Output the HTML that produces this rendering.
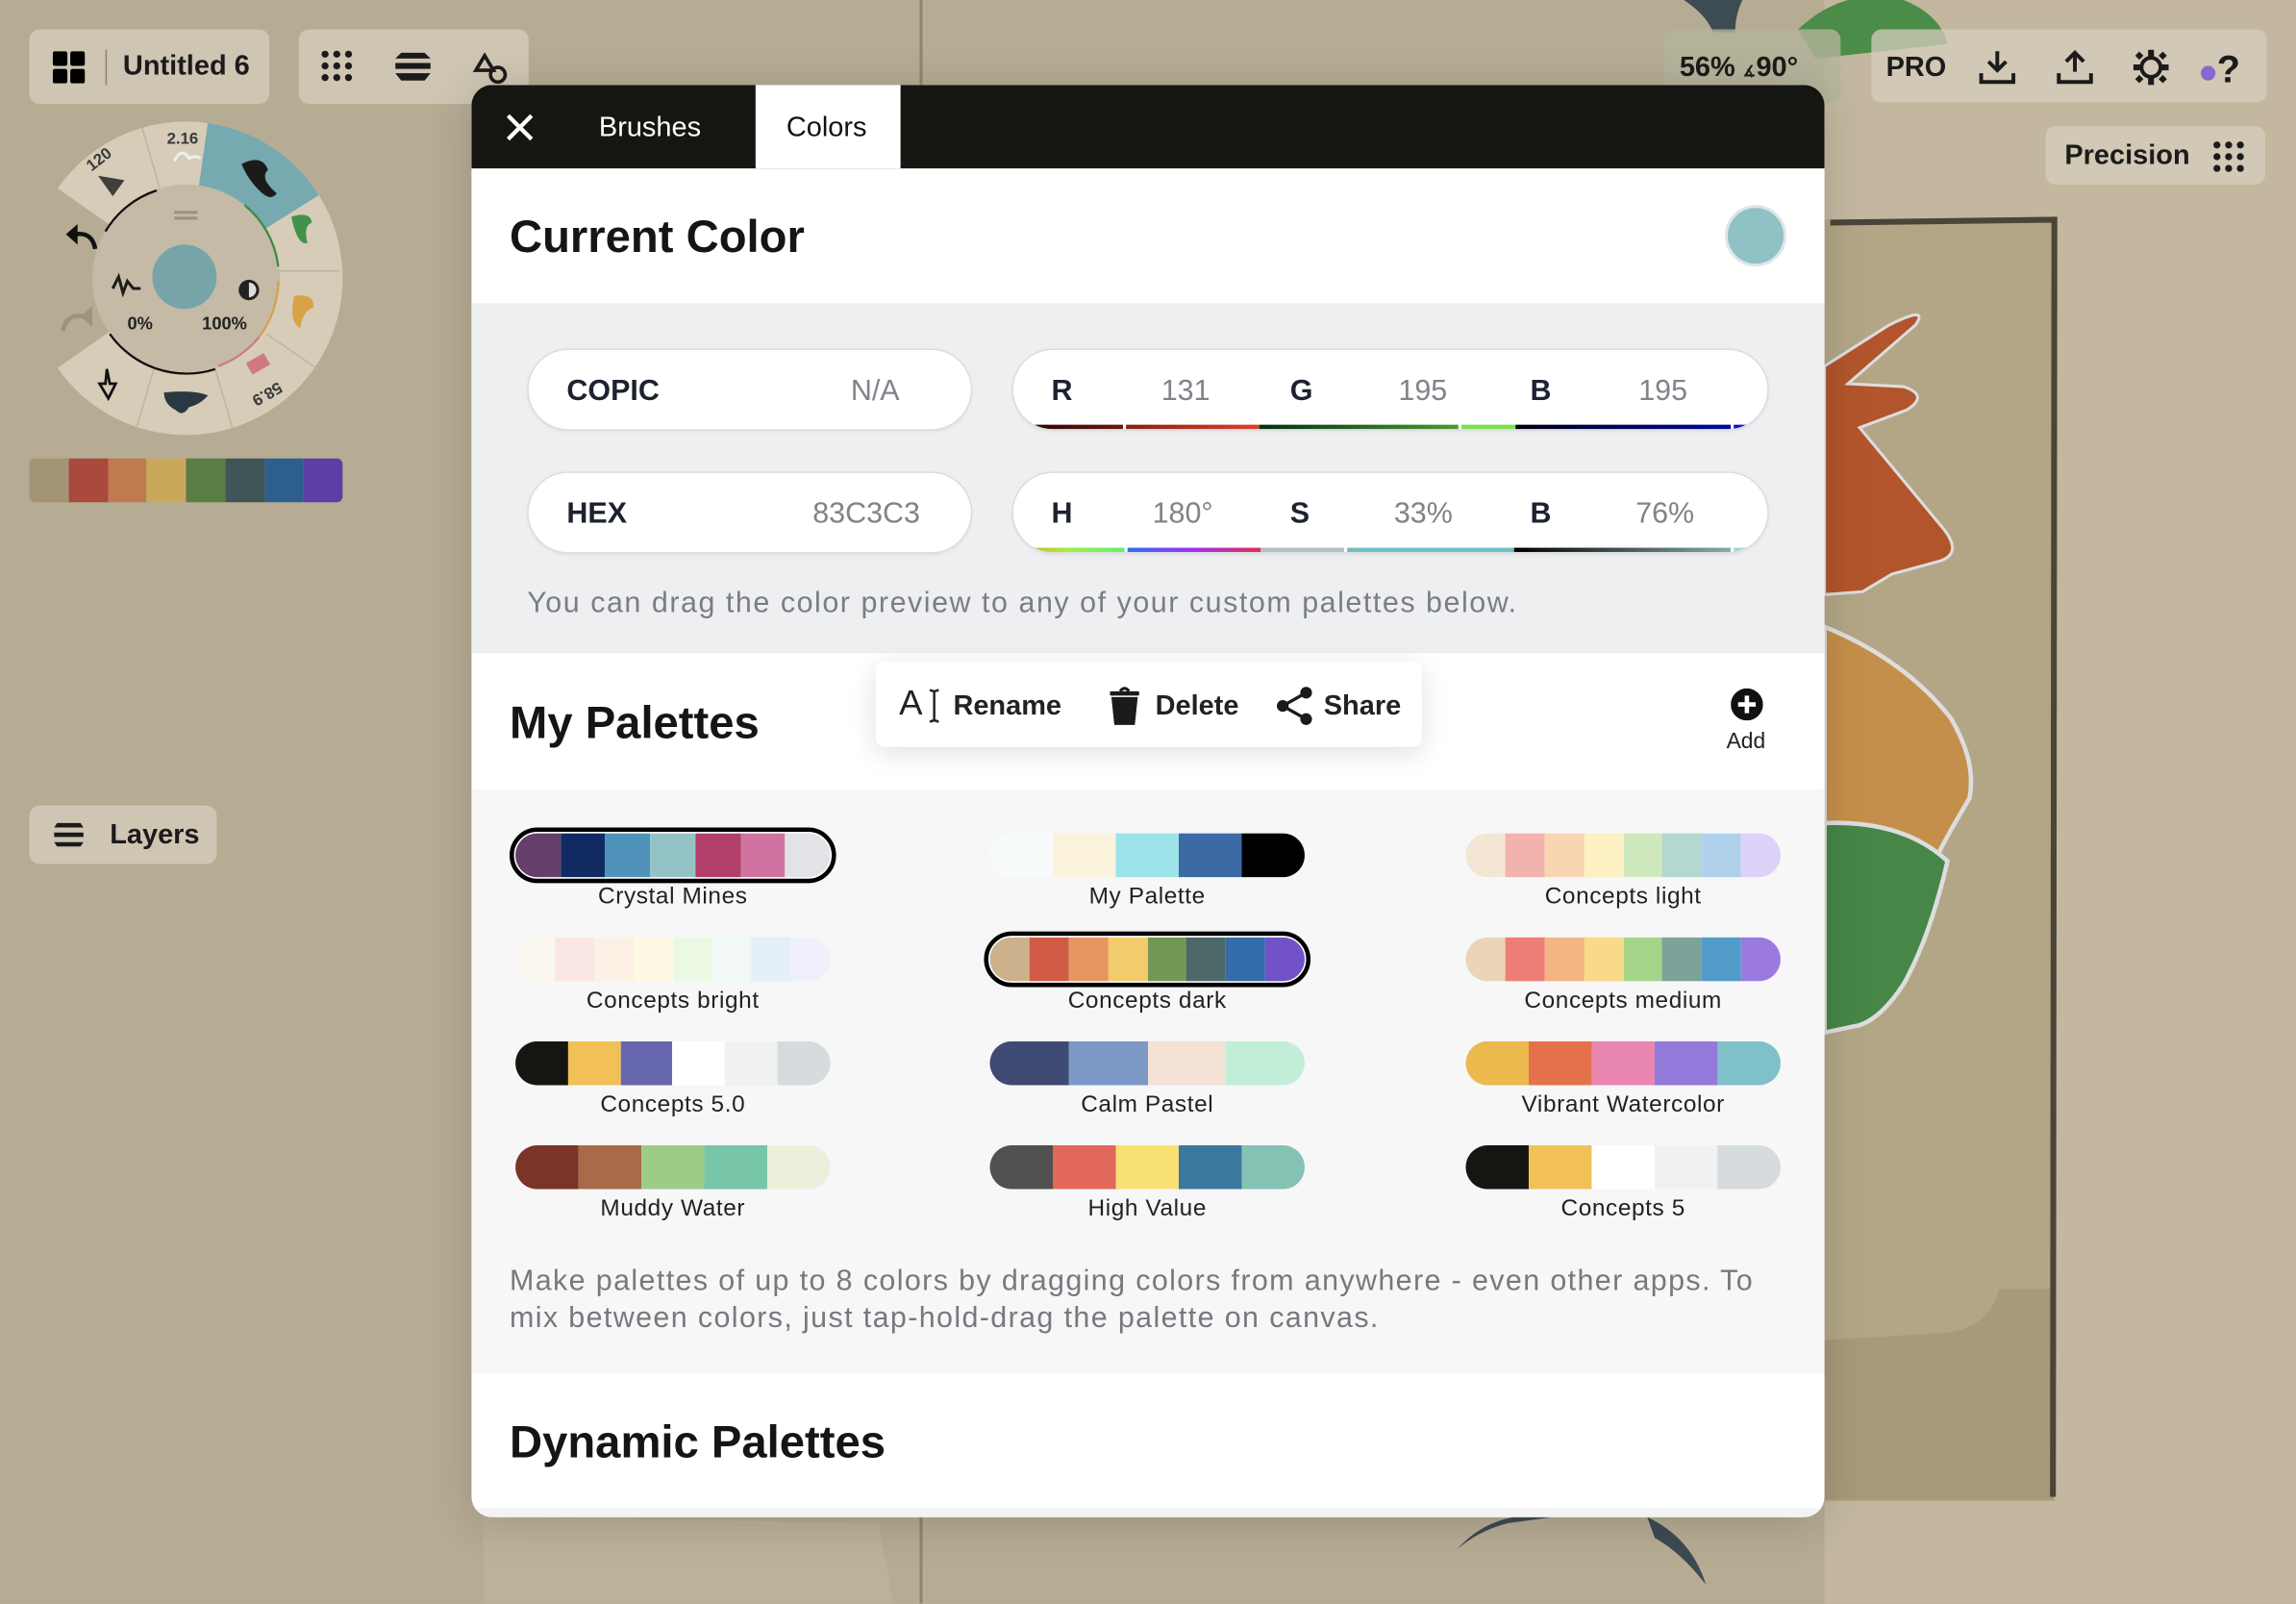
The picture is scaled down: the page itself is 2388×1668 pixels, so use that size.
<!DOCTYPE html>
<html><head><meta charset="utf-8"><style>
*{margin:0;padding:0;box-sizing:border-box}
html,body{width:2388px;height:1668px;overflow:hidden;background:#bcb199}
#s{position:absolute;left:0;top:0;width:1568px;height:1095px;transform:scale(1.52296);transform-origin:0 0;font-family:"Liberation Sans",sans-serif;color:#1b1b1b}
.a{position:absolute}
.box{position:absolute;background:rgba(214,205,188,.75);border-radius:7px}
.t{font-weight:bold;font-size:19px}
#modal{position:absolute;left:322px;top:58px;width:924px;height:978px;border-radius:14px;overflow:hidden;background:#fff;box-shadow:0 4px 30px rgba(0,0,0,.15)}
.pill{position:absolute;background:#fff;border-radius:28px;height:56px;border:1px solid #dcdde0;box-shadow:0 1px 2px rgba(0,0,0,.06);overflow:hidden}
.pill span{position:absolute;top:17px;font-size:20px}
.lb{font-weight:bold;color:#1d2230}
.vl{color:#80838a}
.bar{position:absolute;left:0;right:0;bottom:0;height:3px;display:flex}
.sw{position:absolute;width:215px;height:30px;border-radius:15px;overflow:hidden;display:flex}
.sw i{flex:1}
.sel{position:absolute;width:223px;height:38px;border:3px solid #000;border-radius:19px;background:#fff}
.pl{position:absolute;width:215px;text-align:center;font-size:16px;color:#222;letter-spacing:.4px}
</style></head><body><div id="s">
<svg class="a" style="left:0;top:0" width="1568" height="1095">
<rect width="1568" height="1095" fill="#b6ab93"/>
<rect x="1246" y="0" width="322" height="1095" fill="#c3b89f"/>
<rect x="1246" y="150" width="157" height="875" fill="#b3a687"/>
<path d="M1246 915 L1330 910 Q1360 905 1365 880 L1403 880 L1403 1024 L1246 1024Z" fill="#a79979"/>
<path d="M1250 152 L1403 150 L1402 1022" stroke="#4a4538" stroke-width="4" fill="none"/>
<path d="M629 0 V58 M629 1036 V1095" stroke="#8e8570" stroke-width="2"/>
<path d="M1246 250 L1290 222 Q1318 208 1308 222 L1262 262 L1300 264 Q1318 270 1302 280 L1270 292 L1328 362 Q1340 378 1325 383 L1292 392 L1272 404 L1246 406Z" fill="#b2552c" stroke="#ddd" stroke-width="2"/>
<path d="M1246 428 Q1300 450 1332 490 Q1350 520 1345 545 Q1330 570 1320 590 L1246 570Z" fill="#c48f4a" stroke="#ddd" stroke-width="3"/>
<path d="M1246 562 Q1300 560 1330 588 Q1318 640 1300 672 Q1285 695 1270 700 L1246 705Z" fill="#468646" stroke="#ddd" stroke-width="3"/>
<path d="M1150 0 Q1165 10 1170 22 L1185 22 Q1185 10 1190 0Z" fill="#3d4c52"/>
<path d="M1228 20 Q1260 -10 1300 0 Q1325 10 1330 30 L1240 40Z" fill="#4b8c48"/>
<path d="M995 1058 Q1020 1030 1060 1036 L1030 1040 Q1010 1045 995 1058Z" fill="#3e4a52"/>
<path d="M1125 1036 Q1155 1050 1165 1082 Q1148 1060 1130 1050Z" fill="#3e4a52"/>
<path d="M330 1036 L600 1040 L610 1095 L330 1095Z" fill="#c0b59d" opacity=".6"/>
</svg>

<div class="box" style="left:20px;top:20px;width:164px;height:51px"></div>
<svg class="a" style="left:36px;top:35px" width="22" height="22"><rect x="0" y="0" width="10" height="10" rx="1.5"/><rect x="12" y="0" width="10" height="10" rx="1.5"/><rect x="0" y="12" width="10" height="10" rx="1.5"/><rect x="12" y="12" width="10" height="10" rx="1.5"/></svg>
<div class="a" style="left:72px;top:34px;width:1px;height:24px;background:#8a826f"></div>
<div class="a t" style="left:84px;top:35px">Untitled 6</div>
<div class="box" style="left:204px;top:20px;width:157px;height:51px"></div>
<svg class="a" style="left:219px;top:34px" width="130" height="26">
<g fill="#1b1b1b"><circle cx="3" cy="3" r="2.4"/><circle cx="11" cy="3" r="2.4"/><circle cx="19" cy="3" r="2.4"/><circle cx="3" cy="11" r="2.4"/><circle cx="11" cy="11" r="2.4"/><circle cx="19" cy="11" r="2.4"/><circle cx="3" cy="19" r="2.4"/><circle cx="19" cy="19" r="2.4"/><circle cx="11" cy="19" r="2.4"/>
<path d="M55 2 H71 L75 6 H51Z M51 9 H75 V13 H51Z M51 16 H75 L71 21 H55Z"/></g>
<path d="M112 4 L106 14 H118Z" fill="none" stroke="#1b1b1b" stroke-width="2.4"/><circle cx="121" cy="17" r="5" fill="none" stroke="#1b1b1b" stroke-width="2.4"/>
</svg>

<svg class="a" style="left:20px;top:80px" width="220" height="225">
<g transform="translate(107,110)">
<circle r="85.5" fill="none" stroke="#d6ccb7" stroke-width="43" stroke-dasharray="432.7 104.5" transform="rotate(215)"/>
<circle r="85.5" fill="none" stroke="#76a9b0" stroke-width="43" stroke-dasharray="74.6 462.6" transform="rotate(278)"/>
<g stroke="#bfb49c" stroke-width="1"><line x1="-18" y1="-62" x2="-30" y2="-103"/><line x1="63" y1="-5" x2="105" y2="-5"/><line x1="55" y1="38" x2="90" y2="62"/><line x1="20" y1="62" x2="32" y2="103"/><line x1="-22" y1="62" x2="-34" y2="103"/></g>
<circle r="64" fill="#c4baa5"/>
<path d="M-55 -32 A64 64 0 0 1 -20 -60" stroke="#111" stroke-width="1.5" fill="none"/>
<path d="M-52 38 A64 64 0 0 0 20 62" stroke="#111" stroke-width="1.5" fill="none"/>
<path d="M40 -50 A64 64 0 0 1 63 -8" stroke="#3d8a44" stroke-width="1.5" fill="none"/>
<path d="M63 2 A64 64 0 0 1 50 40" stroke="#d4a24a" stroke-width="1.5" fill="none"/>
<path d="M50 40 A64 64 0 0 1 22 60" stroke="#d07a80" stroke-width="1.5" fill="none"/>
<circle cx="-1" cy="-1" r="22" fill="#76a4a8"/>
<rect x="-8" y="-46" width="16" height="2" fill="#9a917d"/><rect x="-8" y="-42" width="16" height="2" fill="#9a917d"/>
<path d="M38 -78 Q52 -85 56 -74 Q50 -68 62 -58 Q58 -52 50 -60 Q42 -68 38 -78Z" fill="#1b1b1b"/>
<path d="M72 -42 Q85 -46 86 -38 Q80 -36 83 -24 Q76 -22 72 -42Z" fill="#43914a"/>
<path d="M74 12 Q88 10 87 20 Q80 22 78 34 Q70 30 74 12Z" fill="#d9a248"/>
<path d="M-15 78 Q5 76 15 80 Q10 86 2 88 Q-2 95 -7 90 Q-15 86 -15 78Z" fill="#2a3842"/>
<path d="M-60 -70 L-42 -67 L-50 -56Z" fill="#1b1b1b" opacity=".8"/>
<path d="M-8 -80 Q-3 -90 2 -82 Q6 -84 10 -82" stroke="#eee" stroke-width="2" fill="none"/>
<rect x="42" y="54" width="14" height="9" transform="rotate(-30 49 58)" fill="#d07a80"/>
<path d="M-54 62 L-52 72 L-48 72 L-53 82 L-59 72 L-55 72Z" fill="none" stroke="#111" stroke-width="1.8"/>
<text x="-13" y="-92" font-size="11" font-weight="bold" fill="#3a3a3a" font-family="Liberation Sans">2.16</text>
<text x="-68" y="-77" font-size="11" font-weight="bold" fill="#3a3a3a" font-family="Liberation Sans" transform="rotate(-38 -60 -80)">120</text>
<text x="50" y="82" font-size="11" font-weight="bold" fill="#3a3a3a" font-family="Liberation Sans" transform="rotate(150 58 78)">58.9</text>
<text x="-40" y="35" font-size="12" font-weight="bold" fill="#222" font-family="Liberation Sans">0%</text>
<text x="11" y="35" font-size="12" font-weight="bold" fill="#222" font-family="Liberation Sans">100%</text>
<circle cx="43" cy="8" r="7" fill="#222"/><path d="M43 3 A5 5 0 0 1 43 13Z" fill="#ddd"/>
<path d="M-50 7 L-46 -1 L-43 10 L-40 2 L-36 7 L-31 7" stroke="#1b1b1b" stroke-width="2" fill="none"/>
<path d="M-82 -30 L-74 -37 L-74 -23Z" fill="#111"/><path d="M-76 -30 Q-64 -32 -62 -20" stroke="#111" stroke-width="3" fill="none"/>
<path d="M-64 26 L-72 19 L-72 33Z" fill="#9c937f" transform="scale(-1 1) translate(136 0)"/><path d="M-70 26 Q-82 24 -84 36" stroke="#9c937f" stroke-width="3" fill="none"/>
</g></svg>
<div class="a" style="left:20px;top:313px;width:214px;height:30px;border-radius:4px;overflow:hidden;display:flex">
<i style="flex:1;background:#a49476"></i><i style="flex:1;background:#aa4a3c"></i><i style="flex:1;background:#c07a50"></i><i style="flex:1;background:#c9a85a"></i><i style="flex:1;background:#5a7d44"></i><i style="flex:1;background:#3f5558"></i><i style="flex:1;background:#2d5f8e"></i><i style="flex:1;background:#5b3ea6"></i></div>
<div class="box" style="left:20px;top:550px;width:128px;height:40px"></div>
<svg class="a" style="left:36px;top:561px" width="22" height="18"><path d="M3 1 H19 L21 4 H1Z M1 7.5 H21 V10.5 H1Z M1 14 H21 L19 17 H3Z" fill="#1b1b1b"/></svg>
<div class="a t" style="left:75px;top:560px">Layers</div>

<div class="box" style="left:1136px;top:20px;width:121px;height:50px;background:rgba(180,180,155,.8)"></div>
<div class="a t" style="left:1147px;top:36px">56% <span style="font-size:10px">∡</span>90°</div>
<div class="box" style="left:1278px;top:20px;width:270px;height:50px"></div>
<div class="a t" style="left:1288px;top:36px">PRO</div>
<svg class="a" style="left:1350px;top:32px" width="190" height="28">
<g stroke="#1b1b1b" stroke-width="2.6" fill="none"><path d="M14 3 V16 M8 10 L14 16 L20 10 M3 18 V24 H25 V18"/>
<path d="M67 17 V4 M61 10 L67 4 L73 10 M56 18 V24 H78 V18"/>
<circle cx="119" cy="14" r="6.5"/></g>
<g fill="#1b1b1b"><rect x="117" y="2" width="4" height="5"/><rect x="117" y="21" width="4" height="5"/><rect x="107" y="12" width="5" height="4"/><rect x="126" y="12" width="5" height="4"/><rect x="109" y="4" width="4" height="4" transform="rotate(45 111 6)"/><rect x="125" y="4" width="4" height="4" transform="rotate(45 127 6)"/><rect x="109" y="20" width="4" height="4" transform="rotate(45 111 22)"/><rect x="125" y="20" width="4" height="4" transform="rotate(45 127 22)"/></g>
<circle cx="158" cy="18" r="5" fill="#8a67cf"/>
<text x="164" y="24" font-size="26" font-weight="bold" fill="#1b1b1b" font-family="Liberation Sans">?</text>
</svg>
<div class="box" style="left:1397px;top:86px;width:150px;height:40px"></div>
<div class="a t" style="left:1410px;top:96px">Precision</div>
<svg class="a" style="left:1511px;top:96px" width="22" height="22"><g fill="#1b1b1b"><circle cx="3" cy="3" r="2.4"/><circle cx="11" cy="3" r="2.4"/><circle cx="19" cy="3" r="2.4"/><circle cx="3" cy="11" r="2.4"/><circle cx="11" cy="11" r="2.4"/><circle cx="19" cy="11" r="2.4"/><circle cx="3" cy="19" r="2.4"/><circle cx="11" cy="19" r="2.4"/><circle cx="19" cy="19" r="2.4"/></g></svg>

<div id="modal">
<div class="a" style="left:0;top:0;width:924px;height:57px;background:#151511"></div>
<svg class="a" style="left:23px;top:19px" width="20" height="20"><path d="M2 2 L18 18 M18 2 L2 18" stroke="#fff" stroke-width="2.8"/></svg>
<div class="a" style="left:87px;top:19px;color:#fff;font-size:19px">Brushes</div>
<div class="a" style="left:194px;top:0;width:99px;height:57px;background:#fff"></div>
<div class="a" style="left:215px;top:19px;font-size:19px;color:#111">Colors</div>
<div class="a" style="left:26px;top:86px;font-size:31px;font-weight:bold;color:#151515">Current Color</div>
<div class="a" style="left:856px;top:82px;width:42px;height:42px;border-radius:50%;background:#8fc1c5;border:2px solid #dde5e6"></div>

<div class="a" style="left:0;top:149px;width:924px;height:239px;background:#eeeff1"></div>
<div class="pill" style="left:38px;top:180px;width:304px"><span class="lb" style="left:26px">COPIC</span><span class="vl" style="left:220px">N/A</span></div>
<div class="pill" style="left:369px;top:180px;width:517px"><span class="lb" style="left:26px">R</span><span class="vl" style="left:101px">131</span><span class="lb" style="left:189px">G</span><span class="vl" style="left:263px">195</span><span class="lb" style="left:353px">B</span><span class="vl" style="left:427px">195</span>
<div class="bar"><i style="flex:20;background:linear-gradient(90deg,#200,#6a1a10)"></i><i style="width:2px;background:#fff"></i><i style="flex:24;background:linear-gradient(90deg,#8a2010,#e0402a)"></i><i style="flex:36;background:linear-gradient(90deg,#031,#4a9a30)"></i><i style="width:2px;background:#fff"></i><i style="flex:10;background:#7de050"></i><i style="flex:39;background:linear-gradient(90deg,#001,#0008a0)"></i><i style="width:2px;background:#fff"></i><i style="flex:6;background:#1010e0"></i></div></div>
<div class="pill" style="left:38px;top:264px;width:304px"><span class="lb" style="left:26px">HEX</span><span class="vl" style="left:194px">83C3C3</span></div>
<div class="pill" style="left:369px;top:264px;width:517px"><span class="lb" style="left:26px">H</span><span class="vl" style="left:95px">180°</span><span class="lb" style="left:189px">S</span><span class="vl" style="left:260px">33%</span><span class="lb" style="left:353px">B</span><span class="vl" style="left:425px">76%</span>
<div class="bar"><i style="flex:20;background:linear-gradient(90deg,#e0a020,#a0f040,#60f070)"></i><i style="width:2px;background:#fff"></i><i style="flex:24;background:linear-gradient(90deg,#3070f0,#a030f0,#e03050)"></i><i style="flex:15;background:#b0c0c0"></i><i style="width:2px;background:#fff"></i><i style="flex:30;background:#70c0c0"></i><i style="flex:39;background:linear-gradient(90deg,#000,#8aa)"></i><i style="width:2px;background:#fff"></i><i style="flex:6;background:#a0d8d8"></i></div></div>
<div class="a" style="left:38px;top:343px;font-size:20px;letter-spacing:1px;color:#7a7d83;white-space:nowrap">You can drag the color preview to any of your custom palettes below.</div>

<div class="a" style="left:26px;top:418px;font-size:31px;font-weight:bold;color:#151515">My Palettes</div>
<div class="a" style="left:276px;top:394px;width:373px;height:58px;background:#fff;border-radius:6px;box-shadow:0 4px 18px rgba(0,0,0,.13)"></div>
<div class="a" style="left:292px;top:409px;font-size:24px;color:#222">A</div>
<svg class="a" style="left:311px;top:412px" width="10" height="24"><path d="M2 1 Q5 3 8 1 M5 2 V22 M2 23 Q5 21 8 23" stroke="#222" stroke-width="1.6" fill="none"/></svg>
<div class="a" style="left:329px;top:414px;font-size:19px;font-weight:bold;color:#222">Rename</div>
<svg class="a" style="left:434px;top:410px" width="24" height="28"><path d="M3 8 H21 L19 27 H5Z" fill="#1b1b1b"/><rect x="2" y="4" width="20" height="3" rx="1" fill="#1b1b1b"/><path d="M9 4 Q12 0 15 4" stroke="#1b1b1b" stroke-width="2" fill="none"/></svg>
<div class="a" style="left:467px;top:414px;font-size:19px;font-weight:bold;color:#222">Delete</div>
<svg class="a" style="left:549px;top:410px" width="28" height="28"><g fill="#1b1b1b"><circle cx="21" cy="5" r="4"/><circle cx="5" cy="14" r="4"/><circle cx="21" cy="23" r="4"/></g><path d="M21 5 L5 14 L21 23" stroke="#1b1b1b" stroke-width="2.2" fill="none"/></svg>
<div class="a" style="left:582px;top:414px;font-size:19px;font-weight:bold;color:#222">Share</div>
<svg class="a" style="left:860px;top:412px" width="22" height="22"><circle cx="11" cy="11" r="11" fill="#111"/><path d="M11 5 V17 M5 11 H17" stroke="#fff" stroke-width="3"/></svg>
<div class="a" style="left:857px;top:440px;font-size:15px;color:#222">Add</div>

<div class="a" style="left:0;top:481px;width:924px;height:399px;background:#f7f7f8"></div>
<div class="sel" style="left:26px;top:507px"></div>
<div class="sel" style="left:350px;top:578px"></div>
<div class="sw" style="left:30px;top:511px"><i style="background:#66406a"></i><i style="background:#112a62"></i><i style="background:#4f93bb"></i><i style="background:#94c3c5"></i><i style="background:#b23e6a"></i><i style="background:#d173a0"></i><i style="background:#e1e3e6"></i></div>
<div class="sw" style="left:354px;top:511px"><i style="background:#f8fbfb"></i><i style="background:#fbf3dc"></i><i style="background:#9de3ea"></i><i style="background:#3c6aa5"></i><i style="background:#000"></i></div>
<div class="sw" style="left:679px;top:511px"><i style="background:#f3e6d5"></i><i style="background:#f2b2ae"></i><i style="background:#f8d6b2"></i><i style="background:#fdf1c4"></i><i style="background:#cfe8be"></i><i style="background:#b2d8cf"></i><i style="background:#afd1eb"></i><i style="background:#ddd2f8"></i></div>
<div class="sw" style="left:30px;top:582px"><i style="background:#fbf8ef"></i><i style="background:#fbe6e6"></i><i style="background:#fdf1e6"></i><i style="background:#fdf9e3"></i><i style="background:#ebf8e4"></i><i style="background:#f2f8f6"></i><i style="background:#e3eff9"></i><i style="background:#f2effd"></i></div>
<div class="sw" style="left:354px;top:582px"><i style="background:#cbb28c"></i><i style="background:#d05b45"></i><i style="background:#e89660"></i><i style="background:#f2cc6a"></i><i style="background:#719854"></i><i style="background:#4d6869"></i><i style="background:#336ca8"></i><i style="background:#7352c8"></i></div>
<div class="sw" style="left:679px;top:582px"><i style="background:#ead6b6"></i><i style="background:#ee7e75"></i><i style="background:#f4b584"></i><i style="background:#f8da88"></i><i style="background:#a6d38a"></i><i style="background:#7da29a"></i><i style="background:#519cca"></i><i style="background:#9a7ae0"></i></div>
<div class="sw" style="left:30px;top:653px"><i style="background:#151511"></i><i style="background:#f1c158"></i><i style="background:#6767ae"></i><i style="background:#fff"></i><i style="background:#f0f1f1"></i><i style="background:#d6dbde"></i></div>
<div class="sw" style="left:354px;top:653px"><i style="background:#3f4a72"></i><i style="background:#7b98c6"></i><i style="background:#f4e2d6"></i><i style="background:#c2eed8"></i></div>
<div class="sw" style="left:679px;top:653px"><i style="background:#ebb94d"></i><i style="background:#e5714b"></i><i style="background:#e886b0"></i><i style="background:#917ada"></i><i style="background:#80c0c8"></i></div>
<div class="sw" style="left:30px;top:724px"><i style="background:#7b3427"></i><i style="background:#a86b4a"></i><i style="background:#9fcb88"></i><i style="background:#77c6a8"></i><i style="background:#ecf0db"></i></div>
<div class="sw" style="left:354px;top:724px"><i style="background:#515151"></i><i style="background:#e2685c"></i><i style="background:#f8e172"></i><i style="background:#3a789e"></i><i style="background:#84c2b4"></i></div>
<div class="sw" style="left:679px;top:724px"><i style="background:#151511"></i><i style="background:#f1c158"></i><i style="background:#fff"></i><i style="background:#f0f1f1"></i><i style="background:#d6dbde"></i></div>
<div class="pl" style="left:30px;top:546px">Crystal Mines</div>
<div class="pl" style="left:354px;top:546px">My Palette</div>
<div class="pl" style="left:679px;top:546px">Concepts light</div>
<div class="pl" style="left:30px;top:617px">Concepts bright</div>
<div class="pl" style="left:354px;top:617px">Concepts dark</div>
<div class="pl" style="left:679px;top:617px">Concepts medium</div>
<div class="pl" style="left:30px;top:688px">Concepts 5.0</div>
<div class="pl" style="left:354px;top:688px">Calm Pastel</div>
<div class="pl" style="left:679px;top:688px">Vibrant Watercolor</div>
<div class="pl" style="left:30px;top:759px">Muddy Water</div>
<div class="pl" style="left:354px;top:759px">High Value</div>
<div class="pl" style="left:679px;top:759px">Concepts 5</div>
<div class="a" style="left:26px;top:805px;width:880px;font-size:20px;line-height:25px;letter-spacing:.9px;color:#77797e">Make palettes of up to 8 colors by dragging colors from anywhere - even other apps. To mix between colors, just tap-hold-drag the palette on canvas.</div>
<div class="a" style="left:26px;top:909px;font-size:31px;font-weight:bold;color:#151515">Dynamic Palettes</div>
<div class="a" style="left:0;top:972px;width:924px;height:6px;background:#f3f3f4"></div>
</div>
</div></body></html>
